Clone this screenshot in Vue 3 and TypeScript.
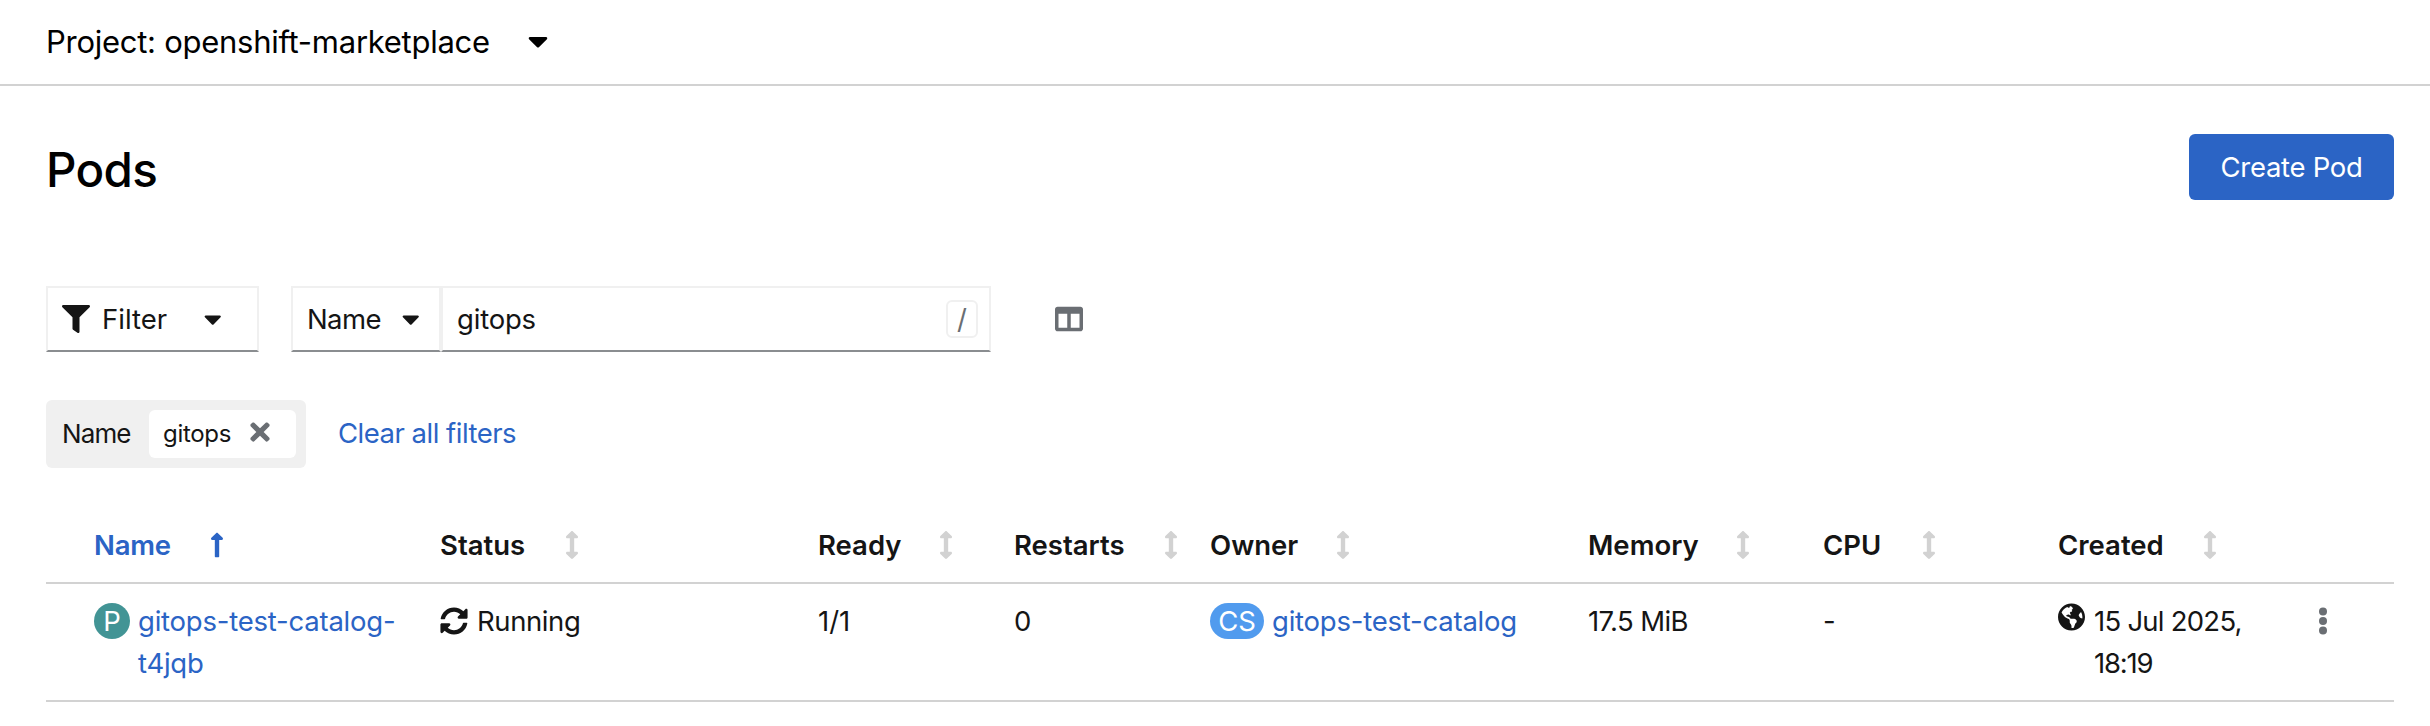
<script setup lang="ts">
interface Column {
  key: string
  label: string
}

const columns: Column[] = [
  { key: 'name', label: 'Name' },
  { key: 'status', label: 'Status' },
  { key: 'ready', label: 'Ready' },
  { key: 'restarts', label: 'Restarts' },
  { key: 'owner', label: 'Owner' },
  { key: 'memory', label: 'Memory' },
  { key: 'cpu', label: 'CPU' },
  { key: 'created', label: 'Created' },
]

const sortedBy = 'name'

const caret =
  'M31.3 192h257.3c17.8 0 26.7 21.5 14.1 34.1L174.1 354.7c-7.8 7.8-20.5 7.8-28.3 0L17.2 226.1C4.6 213.5 13.5 192 31.3 192z'
const arrowUp =
  'M88 166.059V468c0 6.627 5.373 12 12 12h56c6.627 0 12-5.373 12-12V166.059h46.059c21.382 0 32.09-25.851 16.971-40.971l-86.059-86.059c-9.373-9.373-24.569-9.373-33.941 0l-86.059 86.059c-15.119 15.119-4.411 40.971 16.971 40.971H88z'
const arrowBoth =
  'M214.059 377.941H168V134.059h46.059c21.382 0 32.09-25.851 16.971-40.971L144.971 7.029c-9.373-9.373-24.568-9.373-33.941 0L24.971 93.088c-15.119 15.119-4.411 40.971 16.971 40.971H88v243.882H41.941c-21.382 0-32.09 25.851-16.971 40.971l86.059 86.059c9.373 9.373 24.568 9.373 33.941 0l86.059-86.059c15.12-15.119 4.412-40.971-16.97-40.971z'
const filterIcon =
  'M487.976 0H24.028C2.71 0-8.047 25.866 7.058 40.971L192 225.941V432c0 7.831 3.821 15.17 10.237 19.662l80 55.98C298.02 518.69 320 507.493 320 487.98V225.941l184.947-184.97C520.021 25.896 509.338 0 487.976 0z'
const timesIcon =
  'M242.72 256l100.07-100.07c12.28-12.28 12.28-32.19 0-44.48l-22.24-22.24c-12.28-12.28-32.19-12.28-44.48 0L176 189.28 75.93 89.21c-12.28-12.28-32.19-12.28-44.48 0L9.21 111.45c-12.28 12.28-12.28 32.19 0 44.48L109.28 256 9.21 356.07c-12.28 12.28-12.28 32.19 0 44.48l22.24 22.24c12.28 12.28 32.2 12.28 44.48 0L176 322.72l100.07 100.07c12.28 12.28 32.2 12.28 44.48 0l22.24-22.24c12.28-12.28 12.28-32.19 0-44.48L242.72 256z'
const columnsIcon =
  'M464 32H48C21.49 32 0 53.49 0 80v352c0 26.51 21.49 48 48 48h416c26.51 0 48-21.49 48-48V80c0-26.51-21.49-48-48-48zM224 416H64V160h160v256zm224 0H288V160h160v256z'
const syncIcon =
  'M370.72 133.28C339.458 104.008 298.888 87.962 255.848 88c-77.458.068-144.328 53.178-162.791 126.85-1.344 5.363-6.122 9.15-11.651 9.15H24.103c-7.498 0-13.194-6.807-11.807-14.176C33.933 94.924 134.813 8 256 8c66.448 0 126.791 26.136 171.315 68.685L463.03 40.97C478.149 25.851 504 36.559 504 57.941V192c0 13.255-10.745 24-24 24H345.941c-21.382 0-32.09-25.851-16.971-40.971l41.75-41.749zM32 296h134.059c21.382 0 32.09 25.851 16.971 40.971l-41.75 41.75c31.262 29.273 71.835 45.319 114.876 45.28 77.418-.07 144.315-53.144 162.787-126.849 1.344-5.363 6.122-9.15 11.651-9.15h57.304c7.498 0 13.194 6.807 11.807 14.176C478.067 417.076 377.187 504 256 504c-66.448 0-126.791-26.136-171.315-68.685L48.97 471.03C33.851 486.149 8 475.441 8 454.059V320c0-13.255 10.745-24 24-24z'
const globeIcon =
  'M248 8C111.03 8 0 119.03 0 256s111.03 248 248 248 248-111.03 248-248S384.97 8 248 8zm82.29 357.6c-3.9 3.88-7.99 7.95-11.31 11.28-2.99 3-5.1 6.7-6.17 10.71-1.51 5.66-2.73 11.38-4.77 16.87l-17.39 46.85c-13.76 3-28 4.69-42.65 4.69v-27.38c1.69-12.62-7.64-36.26-22.63-51.25-6-6-9.37-14.14-9.37-22.63v-32.01c0-11.64-6.27-22.34-16.46-27.97-14.37-7.95-34.81-19.06-48.81-26.11-11.48-5.78-22.1-13.14-31.65-21.75l-.8-.72a114.792 114.792 0 0 1-18.06-20.74c-9.38-13.77-24.66-36.42-34.59-51.14 20.47-45.5 57.36-82.04 103.2-101.89l24.01 12.01C203.48 89.74 216 82.01 216 70.11v-11.3c7.99-1.29 16.12-2.11 24.39-2.42l28.3 28.3c6.25 6.25 6.25 16.38 0 22.63L264 112l-10.34 10.34c-3.12 3.12-3.12 8.19 0 11.31l4.69 4.69c3.12 3.12 3.12 8.19 0 11.31l-8 8a8.008 8.008 0 0 1-5.66 2.34h-8.99c-2.08 0-4.08.81-5.58 2.27l-9.92 9.65a8.008 8.008 0 0 0-1.58 9.31l15.59 31.19c2.66 5.32-1.21 11.58-7.15 11.58h-5.64c-1.93 0-3.79-.7-5.24-1.96l-9.28-8.06a16.017 16.017 0 0 0-15.55-3.1l-31.17 10.39a11.95 11.95 0 0 0-8.17 11.34c0 4.53 2.56 8.66 6.61 10.69l11.08 5.54c9.41 4.71 19.79 7.16 30.31 7.16s22.59 27.29 32 32h66.75c8.49 0 16.62 3.37 22.63 9.37l13.69 13.69a30.503 30.503 0 0 1 8.93 21.57 46.536 46.536 0 0 1-13.72 32.98zM417 274.25c-5.79-1.45-10.84-5-14.15-9.97l-17.98-26.97a23.97 23.97 0 0 1 0-26.62l19.59-29.38c2.32-3.47 5.5-6.29 9.24-8.15l12.98-6.49C440.2 193.59 448 223.87 448 256c0 8.67-.74 17.16-1.82 25.54L417 274.25z'
</script>

<template>
  <div class="page">
    <header class="project-bar">
      <span class="project-name">Project: openshift-marketplace</span>
      <svg class="caret caret-lg" viewBox="0 0 320 512"><path :d="caret" /></svg>
    </header>

    <main class="content">
      <div class="title-row">
        <h1 class="title">Pods</h1>
        <button class="create" type="button"><span>Create Pod</span></button>
      </div>

      <div class="toolbar">
        <button class="control filter" type="button">
          <svg class="filter-icon" viewBox="0 0 512 512"><path :d="filterIcon" /></svg>
          <span class="filter-label">Filter</span>
          <svg class="caret" viewBox="0 0 320 512"><path :d="caret" /></svg>
        </button>
        <button class="control attribute" type="button">
          <span class="attribute-label">Name</span>
          <svg class="caret" viewBox="0 0 320 512"><path :d="caret" /></svg>
        </button>
        <div class="control search">
          <span class="search-text">gitops</span>
          <kbd class="shortcut">/</kbd>
        </div>
        <svg class="columns-icon" viewBox="0 0 512 512"><path :d="columnsIcon" /></svg>
      </div>

      <div class="chips">
        <div class="chip-group">
          <span class="chip-category">Name</span>
          <span class="chip">
            <span class="chip-text">gitops</span>
            <svg class="times" viewBox="0 0 352 512"><path :d="timesIcon" /></svg>
          </span>
        </div>
        <a class="clear">Clear all filters</a>
      </div>

      <div class="table">
        <div class="tr head">
          <div
            v-for="col in columns"
            :key="col.key"
            class="th"
            :class="{ sorted: col.key === sortedBy }"
          >
            <span class="th-label" :class="'th-' + col.key">{{ col.label }}</span>
            <svg class="sort" viewBox="0 0 256 512">
              <path :d="col.key === sortedBy ? arrowUp : arrowBoth" />
            </svg>
          </div>
        </div>

        <div class="tr body">
          <div class="td">
            <span class="badge pod">P</span>
            <a class="link">gitops-test-catalog-<br />t4jqb</a>
          </div>
          <div class="td">
            <svg class="sync" viewBox="0 0 512 512"><path :d="syncIcon" /></svg>
            <span class="running">Running</span>
          </div>
          <div class="td"><span>1/1</span></div>
          <div class="td"><span>0</span></div>
          <div class="td">
            <span class="badge source">CS</span>
            <a class="link">gitops-test-catalog</a>
          </div>
          <div class="td"><span class="memory">17.5 MiB</span></div>
          <div class="td"><span>-</span></div>
          <div class="td">
            <svg class="globe" viewBox="0 0 496 512"><path :d="globeIcon" /></svg>
            <span><span class="date">15 Jul 2025,</span><br /><span class="time">18:19</span></span>
          </div>
          <div class="td">
            <svg class="kebab" viewBox="0 0 8 28">
              <circle cx="4" cy="4.5" r="4" />
              <circle cx="4" cy="14" r="4" />
              <circle cx="4" cy="23.5" r="4" />
            </svg>
          </div>
        </div>
      </div>
    </main>
  </div>
</template>

<style>
body {
  background: #fff;
}
</style>

<style scoped>
.page {
  width: 2430px;
  height: 726px;
  overflow: hidden;
  box-sizing: border-box;
  font-family: Inter, 'Liberation Sans', sans-serif;
  font-size: 27.5px;
  line-height: 42px;
  color: #151515;
  background: #fff;
  white-space: nowrap;
}
.page * {
  box-sizing: border-box;
}
svg {
  display: block;
  flex: none;
  fill: currentColor;
}
button {
  font: inherit;
  color: inherit;
  margin: 0;
}
.project-bar {
  display: flex;
  align-items: center;
  height: 86px;
  padding: 0 46px 2px;
  border-bottom: 2px solid #d2d2d2;
  color: #000;
}
.project-name {
  width: 482px;
  padding-top: 2px;
  font-size: 31px;
  letter-spacing: -0.27px;
}
.caret {
  width: 17.5px;
  height: 28px;
}
.caret-lg {
  width: 20px;
  height: 32px;
}
.content {
  padding: 0 36px 0 46px;
}
.title-row {
  display: flex;
  justify-content: space-between;
  align-items: center;
  height: 66px;
  margin-top: 48px;
}
.title {
  margin: 5px 0 0;
  font-size: 47.5px;
  font-weight: 500;
  line-height: 62px;
  letter-spacing: -0.7px;
  color: #000;
}
.create {
  width: 205px;
  height: 66px;
  padding: 0;
  border: 0;
  border-radius: 6px;
  background: #2b64c5;
  color: #fff;
  letter-spacing: -0.3px;
}
.toolbar {
  display: flex;
  align-items: center;
  height: 66px;
  margin-top: 86px;
}
.control {
  display: flex;
  align-items: center;
  height: 66px;
  padding: 0 14px;
  border: 2px solid #f0f0f0;
  border-bottom-color: #8a8d90;
  background: #fff;
}
.filter {
  width: 213px;
  margin-right: 32px;
}
.filter-icon {
  width: 28px;
  height: 28px;
}
.filter-label {
  width: 114px;
  padding-left: 12px;
  text-align: left;
}
.attribute {
  width: 150px;
}
.attribute-label {
  width: 95px;
  text-align: left;
  letter-spacing: -0.6px;
}
.search {
  width: 550px;
  justify-content: space-between;
  padding-right: 11px;
}
.search-text {
  letter-spacing: -0.2px;
}
.shortcut {
  width: 32px;
  height: 38px;
  border: 2px solid #f0f0f0;
  border-radius: 6px;
  font: inherit;
  line-height: 35px;
  text-align: center;
  color: #6a6e73;
}
.columns-icon {
  width: 28px;
  height: 28px;
  margin-left: 64px;
  color: #6a6e73;
}
.chips {
  display: flex;
  align-items: center;
  height: 68px;
  margin-top: 48px;
}
.chip-group {
  display: flex;
  align-items: center;
  width: 260px;
  height: 68px;
  padding: 0 10px 0 16px;
  border-radius: 6px;
  background: #f0f0f0;
}
.chip-category {
  width: 87px;
  font-size: 26px;
  letter-spacing: -0.9px;
}
.chip {
  display: flex;
  align-items: center;
  width: 147px;
  height: 48px;
  padding-left: 14px;
  border-radius: 6px;
  background: #fff;
}
.chip-text {
  width: 87px;
  font-size: 24px;
  letter-spacing: -0.3px;
}
.times {
  width: 20px;
  height: 28px;
  margin-top: -4px;
  color: #6a6e73;
}
.clear {
  margin: -3px 0 0 32px;
  color: #2b64c5;
  letter-spacing: -0.5px;
}
.table {
  margin-top: 38px;
}
.tr {
  display: grid;
  grid-template-columns: 346px 378px 196px 196px 378px 235px 235px 261px 1fr;
  padding-left: 48px;
  border-bottom: 2px solid #d2d2d2;
}
.head {
  height: 78px;
  font-weight: 600;
}
.th {
  display: flex;
  align-items: center;
  height: 78px;
}
.th-label {
  margin-right: 39px;
}
.th-name { width: 77px; letter-spacing: -0.2px; }
.th-status { width: 86px; }
.th-ready { width: 82px; }
.th-restarts { width: 111px; }
.th-owner { width: 87px; }
.th-memory { width: 109px; }
.th-cpu { width: 60px; }
.th-created { width: 106px; }
.sort {
  width: 14px;
  height: 28px;
  color: #d2d2d2;
}
.sorted,
.sorted .sort {
  color: #2b64c5;
}
.body {
  height: 118px;
  padding-top: 16px;
}
.td {
  display: flex;
  align-items: flex-start;
}
.link {
  color: #2b64c5;
  letter-spacing: -0.22px;
}
.badge {
  height: 36px;
  margin-top: 3px;
  border-radius: 18px;
  line-height: 37px;
  text-align: center;
  color: #fff;
}
.pod {
  width: 36px;
  margin-right: 8px;
  background: #429495;
}
.source {
  width: 54px;
  margin-right: 8px;
  background: #519bee;
}
.sync {
  width: 28px;
  height: 28px;
  margin: 7px 9px 0 0;
}
.running {
  letter-spacing: -0.4px;
}
.memory {
  letter-spacing: -0.6px;
}
.date {
  letter-spacing: -0.75px;
}
.time {
  letter-spacing: -1.2px;
}
.globe {
  width: 27px;
  height: 28px;
  margin: 3px 9px 0 0;
}
.kebab {
  width: 8px;
  height: 28px;
  margin-top: 7px;
  color: #6a6e73;
}
</style>
